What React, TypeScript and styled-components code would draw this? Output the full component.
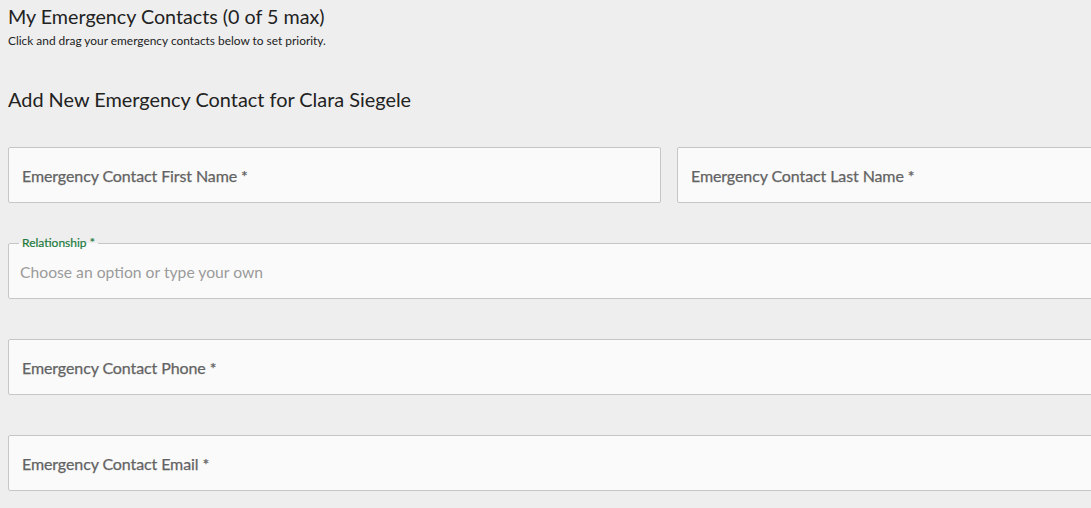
import styled, { createGlobalStyle } from "styled-components";

const GlobalStyle = createGlobalStyle`
  html, body {
    margin: 0;
    padding: 0;
    background: #eeeeee;
    overflow: hidden;
    font-family: Lato, "Open Sans", sans-serif;
  }
`;

const Page = styled.div`
  width: 1338px;
  padding: 0 8px;
  box-sizing: border-box;
`;

const Title = styled.h1`
  margin: 0;
  padding-top: 5px;
  font-size: 19.7px;
  font-weight: 400;
  line-height: 24px;
  color: #222;
`;

const Hint = styled.p`
  margin: 5px 0 0;
  font-size: 11.9px;
  line-height: 14px;
  color: #222;
`;

const SectionTitle = styled.h2`
  margin: 39px 0 0;
  font-size: 19.9px;
  font-weight: 400;
  line-height: 24px;
  color: #222;
`;

const Form = styled.div`
  display: flex;
  flex-direction: column;
  gap: 40px;
  margin-top: 36px;
`;

const Row = styled.div`
  display: grid;
  grid-template-columns: 1fr 1fr;
  gap: 16px;
`;

const Field = styled.div`
  height: 56px;
  box-sizing: border-box;
  border: 1px solid #c6c6c6;
  border-radius: 2px;
  background: #fafafa;
  display: flex;
  align-items: center;
  padding: 0 13px;
  font-size: 16px;
  color: #636363;
  letter-spacing: -0.1px;
  -webkit-text-stroke: 0.25px #636363;
`;

const Outlined = styled.fieldset`
  margin: -6px 0 0;
  height: 62px;
  box-sizing: border-box;
  border: 1px solid #c6c6c6;
  border-radius: 2px;
  background: #fafafa;
  padding: 0 11px;
`;

const Legend = styled.legend`
  font-size: 12px;
  line-height: 12px;
  color: #1c7a3e;
  padding: 0 3px;
  margin-left: -1px;
  -webkit-text-stroke: 0.2px #1c7a3e;
`;

const Placeholder = styled.div`
  font-size: 15.7px;
  line-height: 20px;
  color: #9b9b9b;
  margin-top: 13px;
`;

export default function App() {
  return (
    <>
      <GlobalStyle />
      <Page>
        <Title>My Emergency Contacts (0 of 5 max)</Title>
        <Hint>Click and drag your emergency contacts below to set priority.</Hint>
        <SectionTitle>Add New Emergency Contact for Clara Siegele</SectionTitle>
        <Form>
          <Row>
            <Field>Emergency Contact First Name *</Field>
            <Field>Emergency Contact Last Name *</Field>
          </Row>
          <Outlined>
            <Legend>Relationship *</Legend>
            <Placeholder>Choose an option or type your own</Placeholder>
          </Outlined>
          <Field>Emergency Contact Phone *</Field>
          <Field>Emergency Contact Email *</Field>
        </Form>
      </Page>
    </>
  );
}
